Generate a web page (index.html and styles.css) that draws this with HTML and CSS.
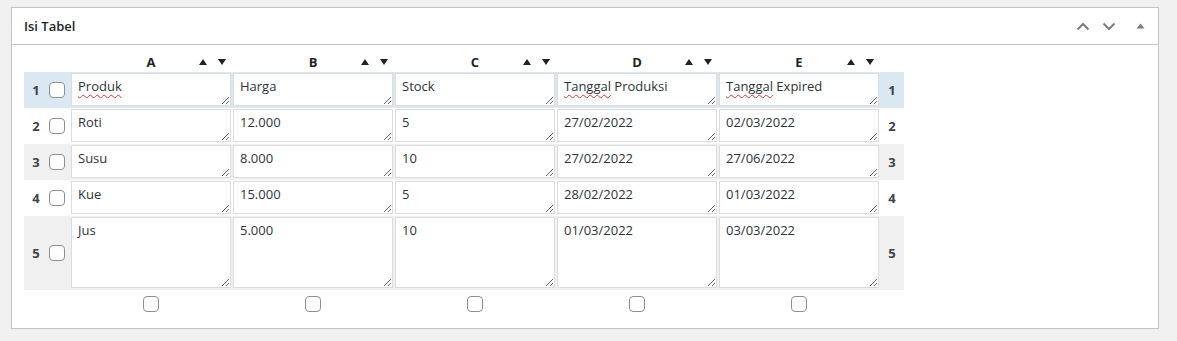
FILE: index.html
```html
<!DOCTYPE html>
<html lang="id">
<head>
  <meta charset="UTF-8">
  <title>Isi Tabel</title>
  <link rel="stylesheet" href="styles.css">
</head>
<body>

  <div class="postbox">
    <div class="postbox-header">
      <h2>Isi Tabel</h2>
      <div class="handle-actions">
        <button class="handle-btn" aria-label="Naikkan">
          <svg width="14" height="9" viewBox="0 0 14 9"><path d="M1.5 7.5 L7 2 L12.5 7.5" fill="none" stroke="currentColor" stroke-width="2"/></svg>
        </button>
        <button class="handle-btn" aria-label="Turunkan">
          <svg width="14" height="9" viewBox="0 0 14 9"><path d="M1.5 1.5 L7 7 L12.5 1.5" fill="none" stroke="currentColor" stroke-width="2"/></svg>
        </button>
        <button class="handle-btn toggle" aria-label="Tutup">
          <svg width="9" height="6" viewBox="0 0 9 6"><path d="M0.5 5.5 L4.5 0.5 L8.5 5.5 Z" fill="currentColor"/></svg>
        </button>
      </div>
    </div>

    <div class="inside">
      <table class="edit-table">
        <thead>
          <tr>
            <th class="num"></th>
            <th class="check"></th>
            <th><div class="col-head"><span class="letter">A</span><span class="sort"><i class="up"></i><i class="down"></i></span></div></th>
            <th><div class="col-head"><span class="letter">B</span><span class="sort"><i class="up"></i><i class="down"></i></span></div></th>
            <th><div class="col-head"><span class="letter">C</span><span class="sort"><i class="up"></i><i class="down"></i></span></div></th>
            <th><div class="col-head"><span class="letter">D</span><span class="sort"><i class="up"></i><i class="down"></i></span></div></th>
            <th><div class="col-head"><span class="letter">E</span><span class="sort"><i class="up"></i><i class="down"></i></span></div></th>
            <th class="num"></th>
          </tr>
        </thead>
        <tbody>
          <tr class="head-row">
            <td class="num">1</td>
            <td class="check"><input type="checkbox"></td>
            <td><div class="cell"><span class="typo">Produk</span></div></td>
            <td><div class="cell">Harga</div></td>
            <td><div class="cell">Stock</div></td>
            <td><div class="cell"><span class="typo">Tanggal</span> Produksi</div></td>
            <td><div class="cell"><span class="typo">Tanggal</span> Expired</div></td>
            <td class="num">1</td>
          </tr>
          <tr>
            <td class="num">2</td>
            <td class="check"><input type="checkbox"></td>
            <td><div class="cell">Roti</div></td>
            <td><div class="cell">12.000</div></td>
            <td><div class="cell">5</div></td>
            <td><div class="cell">27/02/2022</div></td>
            <td><div class="cell">02/03/2022</div></td>
            <td class="num">2</td>
          </tr>
          <tr class="alt">
            <td class="num">3</td>
            <td class="check"><input type="checkbox"></td>
            <td><div class="cell">Susu</div></td>
            <td><div class="cell">8.000</div></td>
            <td><div class="cell">10</div></td>
            <td><div class="cell">27/02/2022</div></td>
            <td><div class="cell">27/06/2022</div></td>
            <td class="num">3</td>
          </tr>
          <tr>
            <td class="num">4</td>
            <td class="check"><input type="checkbox"></td>
            <td><div class="cell">Kue</div></td>
            <td><div class="cell">15.000</div></td>
            <td><div class="cell">5</div></td>
            <td><div class="cell">28/02/2022</div></td>
            <td><div class="cell">01/03/2022</div></td>
            <td class="num">4</td>
          </tr>
          <tr class="alt tall">
            <td class="num">5</td>
            <td class="check"><input type="checkbox"></td>
            <td><div class="cell">Jus</div></td>
            <td><div class="cell">5.000</div></td>
            <td><div class="cell">10</div></td>
            <td><div class="cell">01/03/2022</div></td>
            <td><div class="cell">03/03/2022</div></td>
            <td class="num">5</td>
          </tr>
        </tbody>
        <tfoot>
          <tr>
            <td class="num"></td>
            <td class="check"></td>
            <td><input type="checkbox"></td>
            <td><input type="checkbox"></td>
            <td><input type="checkbox"></td>
            <td><input type="checkbox"></td>
            <td><input type="checkbox"></td>
            <td class="num"></td>
          </tr>
        </tfoot>
      </table>
    </div>
  </div>

</body>
</html>
```

FILE: styles.css
```css
body {
  margin: 0;
  padding: 7px 18px 0 11px;
  background-color: #f0f0f1;
  font-family: "Open Sans", "Noto Sans", sans-serif;
  font-size: 13px;
  color: #1d2327;
}

.postbox {
  background-color: #ffffff;
  border: 1px solid #c3c4c7;
}

.postbox-header {
  display: flex;
  align-items: center;
  justify-content: space-between;
  height: 36px;
  border-bottom: 1px solid #c3c4c7;
}

.postbox-header h2 {
  margin: 0;
  padding-left: 12px;
  font-size: 13px;
  font-weight: 600;
  line-height: 1;
  color: #1d2327;
}

.handle-actions {
  display: flex;
  height: 36px;
}

.handle-btn {
  display: flex;
  align-items: center;
  justify-content: center;
  width: 26px;
  height: 36px;
  padding: 0;
  border: 0;
  background: none;
  color: #787c82;
}

.handle-btn.toggle {
  width: 36px;
}

.inside {
  padding: 7px 12px 12px 12px;
}

.edit-table {
  border-collapse: collapse;
  border-spacing: 0;
}

.edit-table th,
.edit-table td {
  padding: 0;
  vertical-align: top;
}

.edit-table .num {
  width: 24px;
  font-weight: 700;
  text-align: center;
  vertical-align: middle;
  color: #3c434a;
}

.edit-table .check {
  width: 22px;
  vertical-align: middle;
}

.edit-table .check input {
  display: block;
  margin-left: 1px;
}

.edit-table thead th {
  height: 20px;
  vertical-align: middle;
}

.col-head {
  display: grid;
  grid-template-columns: 1fr auto 1fr;
  align-items: center;
  width: 162px;
}

.col-head .letter {
  grid-column: 2;
  font-weight: 700;
  font-size: 13px;
  line-height: 20px;
}

.col-head .sort {
  grid-column: 3;
  justify-self: end;
  display: flex;
  gap: 11px;
  padding-right: 6px;
}

.sort i {
  display: block;
  width: 0;
  height: 0;
  border-left: 4px solid transparent;
  border-right: 4px solid transparent;
}

.sort .up {
  border-bottom: 6px solid #1d2327;
}

.sort .down {
  border-top: 6px solid #1d2327;
}

.edit-table tbody td {
  padding: 1px 1px 2px 1px;
}

.edit-table tbody td.num,
.edit-table tbody td.check {
  padding: 0;
}

.head-row {
  background-color: #d9e8f1;
}

.alt {
  background-color: #f0f0f1;
}

.cell {
  box-sizing: border-box;
  width: 160px;
  height: 33px;
  padding: 3px 6px;
  border: 1px solid #dcdcde;
  background-color: #ffffff;
  line-height: 18px;
  color: #2c3338;
  overflow: hidden;
  resize: both;
  white-space: nowrap;
}

.tall td {
  padding-bottom: 1px;
}

.tall .cell {
  height: 71px;
}

.typo {
  text-decoration: underline wavy #d63638;
  text-decoration-thickness: 1px;
  text-underline-offset: 3px;
}

input[type="checkbox"] {
  appearance: none;
  box-sizing: border-box;
  width: 16px;
  height: 16px;
  margin: 0;
  border: 1px solid #8c8f94;
  border-radius: 4px;
  background-color: #ffffff;
}

.edit-table tfoot td {
  padding: 6px 0 4px 0;
}

.edit-table tfoot input {
  display: block;
  margin: 0 auto;
}
```
